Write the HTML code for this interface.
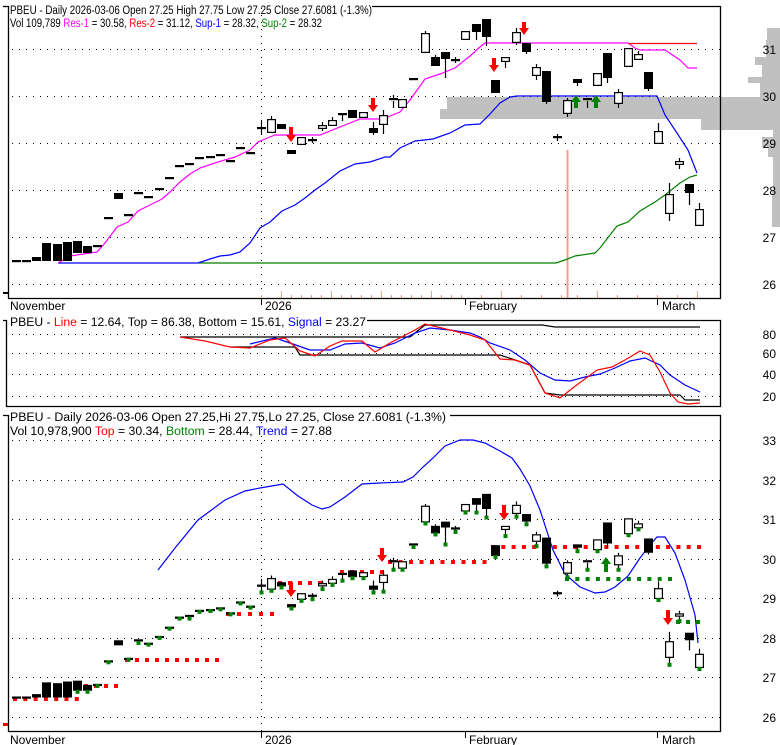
<!DOCTYPE html>
<html><head><meta charset="utf-8"><style>
html,body{margin:0;padding:0;background:#fff;}
svg{display:block;font-family:"Liberation Sans",Arial,sans-serif;}
</style></head><body>
<svg id="s" width="780" height="745" viewBox="0 0 780 745" xmlns="http://www.w3.org/2000/svg">
<rect width="780" height="745" fill="#fff"/>
<g id="bg"></g>
<g fill="#c0c0c0">
<polygon points="447,97 780,97 780,119 440,119 440,109 447,109"/>
<rect x="701" y="119" width="79" height="11"/>
<rect x="767" y="28" width="13" height="12"/>
<rect x="766" y="40" width="14" height="17"/>
<rect x="755" y="57" width="25" height="8"/>
<rect x="762" y="65" width="18" height="12"/>
<rect x="748" y="77" width="32" height="6"/>
<rect x="760" y="83" width="20" height="14"/>
<rect x="773" y="130" width="7" height="7"/>
<rect x="762" y="137" width="18" height="10"/>
<rect x="768" y="147" width="12" height="10"/>
<rect x="773" y="157" width="7" height="33"/>
<rect x="772" y="190" width="8" height="37"/>
</g>
<g id="fg"></g>
<text x="10" y="14" font-size="11.5" textLength="362" lengthAdjust="spacingAndGlyphs">PBEU - Daily 2026-03-06 Open 27.25  High 27.75  Low 27.25  Close 27.6081 (-1.3%)</text>
<text x="10" y="27" font-size="11.5" textLength="312" lengthAdjust="spacingAndGlyphs">Vol 109,789 <tspan fill="#ff00ff">Res-1</tspan> = 30.58, <tspan fill="#ff0000">Res-2</tspan> = 31.12, <tspan fill="#0000ff">Sup-1</tspan> = 28.32, <tspan fill="#008000">Sup-2</tspan> = 28.32</text>
<text x="10" y="326" font-size="11.5" textLength="356" lengthAdjust="spacingAndGlyphs">PBEU - <tspan fill="#ff0000">Line</tspan> = 12.64, Top = 86.38, Bottom = 15.61, <tspan fill="#0000ff">Signal</tspan> = 23.27</text>
<text x="10" y="421" font-size="11.5" textLength="436" lengthAdjust="spacingAndGlyphs">PBEU - Daily 2026-03-06 Open 27.25,Hi 27.75,Lo 27.25, Close 27.6081 (-1.3%)</text>
<text x="10" y="435" font-size="11.5" textLength="322" lengthAdjust="spacingAndGlyphs">Vol 10,978,900 <tspan fill="#ff0000">Top</tspan> = 30.34, <tspan fill="#008000">Bottom</tspan> = 28.44, <tspan fill="#0000ff">Trend</tspan> = 27.88</text>
<g font-size="12">
<text x="10" y="310">November</text><text x="265" y="310">2026</text><text x="469" y="310">February</text><text x="662" y="310">March</text>
<text x="10" y="744">November</text><text x="265" y="744">2026</text><text x="469" y="744">February</text><text x="662" y="744">March</text>
</g>
<g font-size="12" text-anchor="end" id="ax"></g>
</svg>
<script>
var NS="http://www.w3.org/2000/svg";
var bg=document.getElementById('bg'),fg=document.getElementById('fg'),ax=document.getElementById('ax');
function el(p,n,a){var e=document.createElementNS(NS,n);for(var k in a)e.setAttribute(k,a[k]);p.appendChild(e);return e;}
function line(p,x1,y1,x2,y2,c,w,d){var a={x1:x1,y1:y1,x2:x2,y2:y2,stroke:c,'stroke-width':w||1};if(d)a['stroke-dasharray']=d;return el(p,'line',a);}
function pl(p,pts,c,w){el(p,'polyline',{points:pts.map(function(q){return q.join(',')}).join(' '),fill:'none',stroke:c,'stroke-width':w||1});}
function rect(p,x,y,w,h,f){el(p,'rect',{x:x,y:y,width:w,height:h,fill:f});}
[49,96,143,190,237,284].forEach(function(y){line(bg,12,y+.5,720,y+.5,'#000',1,'1 6');});
line(bg,261.5,8,261.5,298,'#000',1,'1 6');
[334,353,374,396].forEach(function(y){line(bg,12,y+.5,720,y+.5,'#000',1,'1 6');});
var byT=function(p){return 440+(33-p)*39.55;};
[33,32,31,30,29,28,27,26].forEach(function(v){var y=Math.round(byT(v));line(bg,12,y+.5,720,y+.5,'#000',1,'1 6');var t=el(ax,'text',{x:776,y:y+5});t.textContent=v;});
line(bg,261.5,415,261.5,731,'#000',1,'1 6');
[[31,49],[30,96],[29,143],[28,190],[27,237],[26,284]].forEach(function(a){var t=el(ax,'text',{x:776,y:a[1]+5});t.textContent=a[0];});
[[80,334],[60,353],[40,374],[20,396]].forEach(function(a){var t=el(ax,'text',{x:776,y:a[1]+5});t.textContent=a[0];});
el(fg,'path',{d:'M372,6.5H720.5V298.5H8.5V6.5H3',fill:'none',stroke:'#000','stroke-width':1.3});
el(fg,'path',{d:'M367,320.5H720.5V406.5H6.5V320.5H3',fill:'none',stroke:'#000','stroke-width':1.3});
el(fg,'path',{d:'M450,415.5H720.5V731.5H8.5V415.5H3',fill:'none',stroke:'#000','stroke-width':1.3});
[261,465,657].forEach(function(x){line(fg,x+.5,298,x+.5,305,'#000',1);line(fg,x+.5,731,x+.5,738,'#000',1);});
line(bg,567.5,150,567.5,298,'#f4a080',2);
[261,281,291,301,311,321,331,341,351,361,371,381,391,401,411,421,431,441,451,461,481,501,521,541,561,577,597,617,637,657,677,697].forEach(function(x,i){line(bg,x+.5,i%5==1?291:295,x+.5,298,'#f4a080',1);});
pl(fg,[[58,263],[198,263]],'#0000ff',1.2);
pl(fg,[[198,263],[556,263],[565,260],[575,256],[595,253],[600,248],[610,235],[617,226],[628,222],[640,211],[655,202],[665,195],[680,183],[690,177],[697,175]],'#008000',1.2);
pl(fg,[[198,263],[210,259],[220,256],[230,255],[240,252],[250,243],[260,228],[270,222],[282,211],[295,205],[305,198],[315,190],[325,183],[340,171],[355,164],[370,162],[385,157],[390,157],[400,148],[415,141],[433,139],[450,133],[465,125],[480,124],[490,114],[500,103],[510,97],[517,96],[657,96],[665,115],[675,130],[688,150],[697,173]],'#0000ff',1.2);
pl(fg,[[58,263],[70,256],[90,253],[97,252],[105,243],[117,227],[128,222],[138,211],[150,205],[162,199],[170,192],[180,182],[190,174],[200,168],[218,162],[235,157],[250,150],[258,142],[265,139],[275,135],[320,135],[340,127],[360,119],[385,119],[390,116],[400,112],[410,100],[425,79],[440,74],[455,68],[470,56],[480,47],[485,43],[628,43],[635,48],[640,50],[665,50],[680,60],[688,68],[697,68]],'#ff00ff',1.2);
line(fg,628,43.5,697,43.5,'#ff0000',1.2);
pl(fg,[[180,337],[205,337],[410,337],[425,325],[542,325],[555,327],[700,327]],'#000',1.2);
pl(fg,[[230,347],[295,347],[300,355],[500,355],[515,360],[530,365],[545,393],[560,395],[680,395],[685,400],[700,400]],'#000',1.2);
pl(fg,[[250,344],[275,338],[290,343],[310,350],[330,350],[345,344],[362,343],[380,348],[395,343],[415,333],[430,328],[450,330],[470,333],[480,337],[490,343],[510,350],[525,360],[540,373],[555,380],[570,381],[585,377],[600,374],[615,368],[630,361],[645,358],[660,365],[670,375],[685,385],[700,392]],'#0000ff',1.2);
pl(fg,[[180,337],[205,341],[230,347],[250,348],[270,340],[285,338],[300,351],[315,356],[330,346],[342,341],[362,341],[375,352],[390,343],[415,330],[425,324],[450,330],[470,335],[485,340],[500,359],[515,360],[530,365],[545,393],[560,398],[578,384],[597,370],[612,367],[625,360],[640,351],[650,355],[660,372],[670,393],[678,402],[688,404],[700,403]],'#ff0000',1.2);
pl(fg,[[158,570],[175,548],[198,520],[225,500],[245,491],[260,488],[283,484],[298,496],[312,505],[322,509],[330,507],[345,497],[362,484],[380,483],[403,482],[413,477],[422,468],[433,458],[445,446],[460,440],[473,440],[485,443],[500,451],[512,458],[520,469],[530,486],[540,510],[553,550],[565,574],[580,587],[595,593],[605,592],[615,587],[628,576],[640,558],[650,545],[657,537],[665,537],[675,553],[685,580],[695,615],[698,643]],'#0000ff',1.2);
function dots(y,x1,x2,c,st){for(var x=x1;x<=x2;x+=(st||10))rect(fg,x-2,y-2,4,4,c);}
dots(699,15,77,'#f00',10.3);dots(686,86,117,'#f00',10);dots(660,127,220,'#f00',10);dots(614,228,272,'#f00',11);
dots(583,280,322,'#f00',10);dots(572,342,382,'#f00',10);dots(562,390,485,'#f00',10.5);dots(547,493,700,'#f00',10.3);
dots(579,567,670,'#008000',10.3);dots(622,678,700,'#008000',10);
rect(fg,3,723,5,3,'#f00');rect(fg,3,292,6,2,'#000');
var C=[[12,261,261],[22,261,261],[32,257,261],[42,243,261],[53,244,261],[63,242,261],[73,241,253],[83,246,253],[93,246,246],[104,218,218],[114,193,199],[124,215,215],[134,193,195,0,0,'w'],[144,197,197],[155,189,189],[165,178,178],[175,166,166],[185,164,166],[195,158,158],[206,157,157],[216,155,155],[226,161,161],[236,148,148],[246,153,153],
[257,128,128,120,135],[267,119,133,116,133,'w'],[277,124,129],[287,150,154],[297,137,145,0,0,'w'],[308,140,140,137,143],[318,125,129,122,131,'w'],[328,120,126,117,126,'w'],[338,114,114,114,121],[348,110,118],[359,112,118,0,0,'w'],[369,128,133,122,135],[379,115,125,110,134,'w'],[389,99,101,95,108,'w'],[398,99,108,0,0,'w'],[409,79,81,0,0,'w'],
[421,33,53,31,53,'w'],[431,57,66,55,66],[441,52,59,52,78],[451,60,60,57,63],[461,31,40,0,0,'w'],[472,24,32,24,40],[482,19,37,19,46],[491,80,93],[501,57,62,57,68,'w'],[512,32,43,28,45,'w'],[522,43,52,43,54],[532,67,76,64,80,'w'],[542,71,102,71,104],[553,137,137,134,141],[563,100,114,98,117,'w'],[573,79,83,79,86],[583,99,101,99,108,'w'],[593,73,86,0,0,'w'],[603,53,78,53,83],[614,92,104,89,108,'w'],[624,48,67,0,0,'w'],[634,54,60,51,60,'w'],[644,72,89,72,91],[654,131,144,123,144,'w'],[665,194,214,183,221,'w'],[675,161,165,158,169,'w'],[685,184,193,184,205],[695,209,226,203,226,'w']];
function price(y){return 31-(y-49)/47;}
var noG={10:1,53:1,58:1,62:1,66:1,68:1,71:1,72:1,73:1};
function draw(f,i){
 C.forEach(function(c,k){
  var x=c[0],bt=f(c[1]),bb=f(c[2]),wt=c[3]?f(c[3]):bt,wb=c[4]?f(c[4]):bb,w=c[5]=='w';
  var cx=x+4.5;
  if(wt<bt)line(fg,cx,wt,cx,bt,'#000',1.2);
  if(wb>bb)line(fg,cx,bb,cx,wb,'#000',1.2);
  if(bb-bt<2.5){rect(fg,x,bt-1,9,2.2,'#000');}
  else if(w){el(fg,'rect',{x:x+.6,y:bt+.6,width:7.8,height:bb-bt-1.2,fill:'#fff',stroke:'#000','stroke-width':1.2});}
  else rect(fg,x,bt,9,bb-bt,'#000');
  if(i&&k>=6&&!noG[k])rect(fg,cx-2,Math.max(wb,bb)-1,4,4,'#008000');
 });
}
draw(function(y){return y;},0);
draw(function(y){return byT(price(y));},1);
function arr(cx,y0,y1,c,up){
 if(!up)el(fg,'polygon',{points:[cx-2,y0,cx+2,y0,cx+2,y1-7,cx+5,y1-7,cx,y1,cx-5,y1-7,cx-2,y1-7].join(' '),fill:c});
 else el(fg,'polygon',{points:[cx-2,y1,cx+2,y1,cx+2,y0+7,cx+5,y0+7,cx,y0,cx-5,y0+7,cx-2,y0+7].join(' '),fill:c});
}
arr(291,127,142,'#f00');arr(373,98,112,'#f00');arr(494,58,72,'#f00');arr(524,22,35,'#f00');
arr(576,95,108,'#008000',1);arr(596,95,108,'#008000',1);
arr(291,582,597,'#f00');arr(382,548,562,'#f00');arr(504,505,520,'#f00');arr(668,610,625,'#f00');
arr(606,557,572,'#008000',1);
</script>
</body></html>
